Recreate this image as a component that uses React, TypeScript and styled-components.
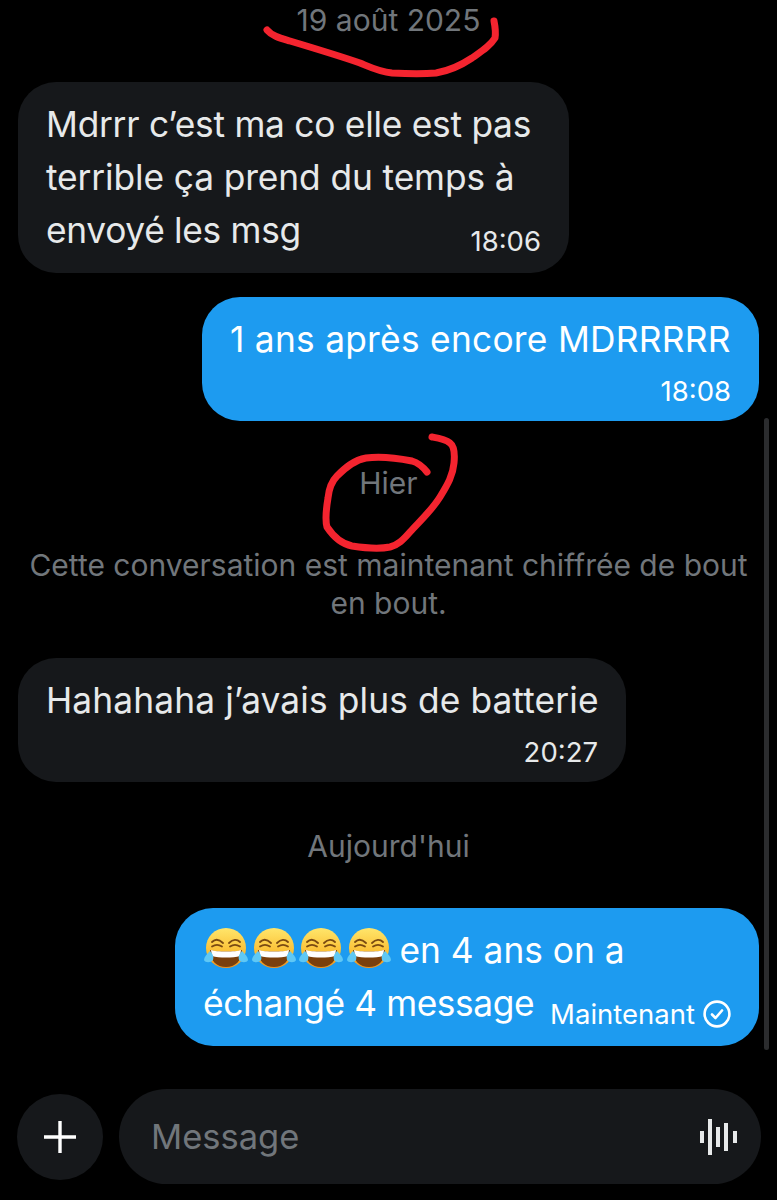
import React from 'react';
import styled, { createGlobalStyle } from 'styled-components';

const GlobalStyle = createGlobalStyle`
  html, body {
    margin: 0;
    padding: 0;
    background: #000;
  }
  * {
    box-sizing: border-box;
  }
`;

const Page = styled.div`
  position: relative;
  width: 777px;
  height: 1200px;
  overflow: hidden;
  background: #000;
  color: #e7e9ea;
  font-family: Inter, "Liberation Sans", sans-serif;
  display: flex;
  flex-direction: column;
`;

const Thread = styled.div`
  flex: 1;
  display: flex;
  flex-direction: column;
  padding: 0 18px;
`;

const DateLabel = styled.div<{ $top: number; $bottom: number }>`
  margin: ${(p) => p.$top}px 0 ${(p) => p.$bottom}px;
  text-align: center;
  font-size: 30px;
  line-height: 38px;
  color: #71767b;
`;

const Notice = styled.div`
  margin: 0 0 36px;
  text-align: center;
  font-size: 30px;
  line-height: 38px;
  white-space: nowrap;
  color: #71767b;
`;

const Bubble = styled.div<{ $mine?: boolean; $width: number; $top?: number }>`
  align-self: ${(p) => (p.$mine ? 'flex-end' : 'flex-start')};
  width: ${(p) => p.$width}px;
  margin-top: ${(p) => p.$top ?? 0}px;
  padding: 16px 28px;
  border-radius: 38px;
  background: ${(p) => (p.$mine ? '#1d9bf0' : '#16181b')};
  color: ${(p) => (p.$mine ? '#fff' : '#e7e9ea')};
`;

const Line = styled.div<{ $tracking?: number }>`
  display: flex;
  align-items: flex-end;
  justify-content: space-between;
  font-size: 35.3px;
  line-height: 53px;
  letter-spacing: ${(p) => p.$tracking ?? 0}px;
  white-space: nowrap;
`;

const Meta = styled.span`
  display: inline-flex;
  align-items: center;
  gap: 8px;
  margin-bottom: -1px;
  font-size: 27.5px;
  line-height: 34px;
  letter-spacing: 0;
`;

const MetaRow = styled.div`
  display: flex;
  justify-content: flex-end;
  margin: 8px 0 -2px;
`;

const Emojis = styled.span`
  display: inline-flex;
  gap: 1.5px;
  margin-right: 8px;
  vertical-align: -9px;
`;

const Composer = styled.div`
  display: flex;
  align-items: center;
  gap: 16px;
  padding: 0 16px 16px 17px;
`;

const AddButton = styled.div`
  flex: none;
  width: 86px;
  height: 86px;
  border-radius: 50%;
  background: #16181b;
  display: flex;
  align-items: center;
  justify-content: center;
`;

const InputBox = styled.div`
  flex: 1;
  height: 95px;
  border-radius: 48px;
  background: #16181b;
  display: flex;
  align-items: center;
  justify-content: space-between;
  padding: 0 24px 0 32px;
`;

const Placeholder = styled.span`
  font-size: 34.5px;
  color: #71767b;
`;

const Scrollbar = styled.div`
  position: absolute;
  top: 418px;
  left: 764px;
  width: 5px;
  height: 632px;
  border-radius: 3px;
  background: #2b2c2e;
`;

const Scribble = styled.svg`
  position: absolute;
  top: 0;
  left: 0;
  pointer-events: none;
`;

const LaughEmoji = () => (
  <svg width="46" height="46" viewBox="0 0 46 46">
    <defs>
      <linearGradient id="face" x1="0" y1="0" x2="0" y2="1">
        <stop offset="0" stopColor="#ffe66b" />
        <stop offset="0.6" stopColor="#fbbf34" />
        <stop offset="1" stopColor="#ee8f1e" />
      </linearGradient>
    </defs>
    <circle cx="23" cy="22" r="20" fill="url(#face)" />
    <path d="M7 24c5 2 27 2 32 0c0 11-7 17-16 17s-16-6-16-17z" fill="#7a3f0c" />
    <path d="M8 24c5 2 25 2 30 0l-1 6c-7 2-21 2-28 0z" fill="#fff" />
    <path d="M9 16c3-3 7-3 11 1M37 16c-3-3-7-3-11 1" fill="none" stroke="#7a4a12" strokeWidth="1.8" strokeLinecap="round" />
    <path d="M9 20.5c3-2 7-2 10 0M37 20.5c-3-2-7-2-10 0" fill="none" stroke="#7a4a12" strokeWidth="1.8" strokeLinecap="round" />
    <path d="M7 25c-3 3-6 6-6 9c1 3 7 3 9 0c1-3 0-6-3-9z" fill="#5fc8f5" />
    <path d="M39 25c3 3 6 6 6 9c-1 3-7 3-9 0c-1-3 0-6 3-9z" fill="#5fc8f5" />
  </svg>
);

const SentIcon = () => (
  <svg width="28" height="28" viewBox="0 0 28 28" fill="none" stroke="#fff" strokeWidth="2.6">
    <circle cx="14" cy="14" r="12.4" />
    <path d="M9 14.5l3.5 3.5L19 10.5" strokeLinecap="round" strokeLinejoin="round" />
  </svg>
);

const PlusIcon = () => (
  <svg width="34" height="34" viewBox="0 0 34 34" stroke="#fff" strokeWidth="3.4">
    <path d="M17 1v32M1 17h32" />
  </svg>
);

const VoiceIcon = () => (
  <svg width="37" height="38" viewBox="0 0 37 38" fill="#e7e9ea">
    <rect x="0" y="13" width="4" height="12" />
    <rect x="8" y="1" width="4" height="36" />
    <rect x="16" y="9" width="4" height="20" />
    <rect x="24" y="5" width="4" height="28" />
    <rect x="33" y="13" width="4" height="12" />
  </svg>
);

const App: React.FC = () => {
  return (
    <Page>
      <GlobalStyle />
      <Thread>
        <DateLabel $top={1} $bottom={43}>19 août 2025</DateLabel>
        <Bubble $width={551}>
          <Line $tracking={-0.25}>Mdrrr c’est ma co elle est pas</Line>
          <Line $tracking={-0.1}>terrible ça prend du temps à</Line>
          <Line $tracking={-0.3}>
            envoyé les msg
            <Meta>18:06</Meta>
          </Line>
        </Bubble>
        <Bubble $mine $width={557} $top={24}>
          <Line $tracking={0.27}>1 ans après encore MDRRRRR</Line>
          <MetaRow>
            <Meta>18:08</Meta>
          </MetaRow>
        </Bubble>
        <DateLabel $top={43} $bottom={44}>Hier</DateLabel>
        <Notice>
          Cette conversation est maintenant chiffrée de bout
          <br />
          en bout.
        </Notice>
        <Bubble $width={608}>
          <Line $tracking={0.12}>Hahahaha j’avais plus de batterie</Line>
          <MetaRow>
            <Meta>20:27</Meta>
          </MetaRow>
        </Bubble>
        <DateLabel $top={45} $bottom={43}>Aujourd'hui</DateLabel>
        <Bubble $mine $width={584}>
          <Line>
            <span>
              <Emojis>
                <LaughEmoji />
                <LaughEmoji />
                <LaughEmoji />
                <LaughEmoji />
              </Emojis>
              en 4 ans on a
            </span>
          </Line>
          <Line $tracking={-0.4}>
            échangé 4 message
            <Meta>
              Maintenant
              <SentIcon />
            </Meta>
          </Line>
        </Bubble>
      </Thread>
      <Composer>
        <AddButton>
          <PlusIcon />
        </AddButton>
        <InputBox>
          <Placeholder>Message</Placeholder>
          <VoiceIcon />
        </InputBox>
      </Composer>
      <Scrollbar />
      <Scribble width="777" height="1200" viewBox="0 0 777 1200" fill="none" stroke="#f4242f" strokeWidth="7" strokeLinecap="round" strokeLinejoin="round">
        <path d="M267 30C272 36 280 38 290 41C310 47 340 56 360 63C372 68 380 72 392 73C410 74 425 74 436 73C448 71 460 66 472 58C482 51 490 46 495 38C496 32 495 26 494 21" />
        <path d="M427 472C423 467 419 463 412 461C397 458 380 456 366 458C354 460 345 468 337 476C331 482 329 488 328 498C326 510 325 520 327 527C333 536 342 544 352 546C365 548 380 549 390 547C398 545 403 540 410 532C420 521 432 510 440 497C448 484 453 475 454 463C455 453 454 446 450 443C445 439 438 438 432 437" />
      </Scribble>
    </Page>
  );
};

export default App;
